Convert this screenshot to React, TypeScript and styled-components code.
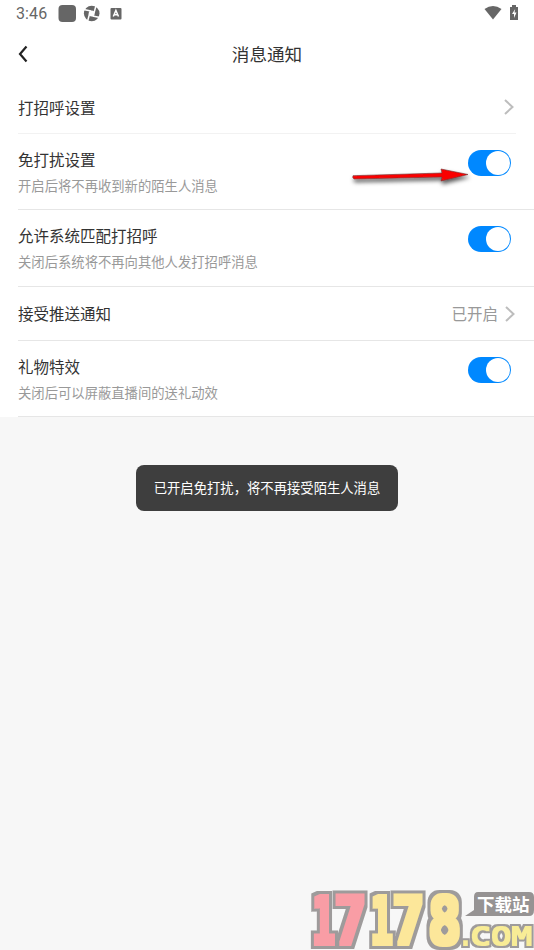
import React from "react";
import styled, { createGlobalStyle } from "styled-components";

const GlobalStyle = createGlobalStyle`
  * { box-sizing: border-box; }
  body {
    margin: 0;
    background: #f7f7f7;
    font-family: "Noto Sans CJK SC", "Noto Sans", sans-serif;
  }
`;

const Screen = styled.div`
  position: relative;
  width: 534px;
  height: 950px;
  overflow: hidden;
  background: #f7f7f7;
`;

const StatusBar = styled.div`
  display: flex;
  align-items: center;
  height: 28px;
  padding: 0 15px 0 16px;
  background: #fff;
  color: #666;
`;

const Clock = styled.span`
  width: 42px;
  font: 400 16px/28px Roboto, sans-serif;
  letter-spacing: 0.1px;
`;

const StatusIcons = styled.div`
  display: flex;
  align-items: center;
  height: 28px;
  flex: 1;
`;

const SystemIcons = styled.div`
  display: flex;
  gap: 7px;
  margin-top: -2px;
`;

const Header = styled.header`
  display: grid;
  grid-template-columns: 36px 1fr 36px;
  align-items: center;
  height: 53px;
  padding-bottom: 2px;
  background: #fff;
`;

const BackButton = styled.button`
  display: flex;
  padding: 0 0 0 16px;
  border: 0;
  background: none;
`;

const Title = styled.h1`
  margin: 0;
  text-align: center;
  font-size: 17.6px;
  line-height: 26px;
  font-weight: 400;
  color: #333;
`;

const List = styled.main`
  display: flex;
  flex-direction: column;
  background: #fff;
`;

const Row = styled.section<{ $height: number; $inset?: boolean }>`
  display: flex;
  justify-content: space-between;
  height: ${(p) => p.$height}px;
  margin-left: 18px;
  margin-right: ${(p) => (p.$inset ? 18 : 0)}px;
  padding-right: ${(p) => (p.$inset ? 1 : 18)}px;
  border-bottom: 1px solid ${(p) => (p.$inset ? "#f2f2f2" : "#e6e6e6")};
`;

const Labels = styled.div<{ $top: number }>`
  display: flex;
  flex-direction: column;
  padding-top: ${(p) => p.$top}px;
`;

const Label = styled.span`
  font-size: 15.5px;
  line-height: 24px;
  color: #333;
`;

const Hint = styled.span`
  margin-top: 5px;
  font-size: 13.33px;
  line-height: 20px;
  color: #999;
`;

const Value = styled.div`
  display: flex;
  align-items: center;
  gap: 6px;
  font-size: 15.5px;
  color: #999;
`;

const ValueText = styled.span`
  line-height: 24px;
  padding-bottom: 2px;
`;

const Toggle = styled.button`
  display: flex;
  justify-content: flex-end;
  width: 43px;
  height: 26px;
  margin: 16px 5px 0 0;
  padding: 1px;
  border: 0;
  border-radius: 13px;
  background: #0088ff;
`;

const Knob = styled.span`
  width: 24px;
  height: 24px;
  border-radius: 50%;
  background: #fff;
`;

const Toast = styled.div`
  position: absolute;
  left: 136px;
  top: 465px;
  width: 262px;
  height: 46px;
  border-radius: 8px;
  background: #3e3e3e;
  color: #fff;
  font-size: 13.33px;
  line-height: 46px;
  text-align: center;
  white-space: nowrap;
`;

const Pointer = styled.svg`
  position: absolute;
  left: 343px;
  top: 160px;
`;

const Watermark = styled.div`
  position: absolute;
  left: 304px;
  top: 884px;
  width: 230px;
  height: 66px;
`;

const WatermarkArt = styled.svg`
  display: block;
`;

const Chevron = () => (
  <svg width="12" height="18" viewBox="0 0 12 18" fill="none">
    <path d="M2 2L9.5 9L2 16" stroke="#bdbdbd" strokeWidth="2" />
  </svg>
);

const Switch = () => (
  <Toggle role="switch" aria-checked="true">
    <Knob />
  </Toggle>
);

const ToggleRow = ({ label, hint, height }: { label: string; hint: string; height: number }) => (
  <Row $height={height}>
    <Labels $top={13}>
      <Label>{label}</Label>
      <Hint>{hint}</Hint>
    </Labels>
    <Switch />
  </Row>
);

const digits = [
  { char: "1", x: 8.5, scale: 0.56, fill: "#f99da5" },
  { char: "7", x: 30, scale: 0.82, fill: "#f99da5" },
  { char: "1", x: 67, scale: 0.54, fill: "#fce79a" },
  { char: "7", x: 88, scale: 0.82, fill: "#fce79a" },
  { char: "8", x: 124, scale: 0.84, fill: "#fce79a" },
];

const BlockOutline = ({ id, grow, edge }: { id: string; grow: number; edge: number }) => (
  <filter id={id} filterUnits="userSpaceOnUse" x="0" y="0" width="230" height="66" colorInterpolationFilters="sRGB">
    <feMorphology in="SourceGraphic" operator="dilate" radius={grow} result="body" />
    <feMorphology in="SourceAlpha" operator="dilate" radius={edge} result="spread" />
    <feFlood floodColor="#9e9b9b" />
    <feComposite in2="spread" operator="in" result="outline" />
    <feMerge>
      <feMergeNode in="outline" />
      <feMergeNode in="body" />
    </feMerge>
  </filter>
);

const Brand = () => (
  <Watermark>
    <WatermarkArt width="230" height="66" viewBox="0 0 230 66">
      <defs>
        <BlockOutline id="digits" grow={2} edge={5} />
        <BlockOutline id="domain" grow={1} edge={3} />
      </defs>
      <g fontFamily="DejaVu Sans Mono, monospace">
        <g filter="url(#digits)" fontWeight="700">
          {digits.map((d, i) => (
            <text key={i} fontSize="66" fill={d.fill} transform={`translate(${d.x} 60) scale(${d.scale} 1)`}>
              {d.char}
            </text>
          ))}
        </g>
        <g filter="url(#domain)" fill="#f8ec96" fontSize="24">
          <text transform="translate(155 61) scale(0.9 1)">.</text>
          <text transform="translate(166.5 61) scale(1.42 1)">COM</text>
        </g>
      </g>
      <path d="M174 8H225Q230 8 230 13V26Q230 32 225 32H161L170 26V13Q170 8 174 8Z" fill="#969393" />
      <text x="173" y="26.5" fontFamily="Noto Sans CJK SC, sans-serif" fontWeight="700" fontSize="17.5" fill="#fff">下载站</text>
    </WatermarkArt>
  </Watermark>
);

export default function App() {
  return (
    <>
      <GlobalStyle />
      <Screen>
        <StatusBar>
          <Clock>3:46</Clock>
          <StatusIcons>
            <svg width="68" height="20" viewBox="0 0 68 20">
              <rect x="0.5" y="1" width="17.5" height="17" rx="4" fill="#666" />
              <circle cx="33.7" cy="9.5" r="7.8" fill="#666" />
              <circle cx="33.7" cy="9.5" r="3" fill="#fff" />
              <path d="M25.5 5.5L33 7M38 1.5L36 9M42 13.5L34.5 12M29.5 17.5L31.5 10" stroke="#fff" strokeWidth="1.5" />
              <rect x="52.5" y="4" width="11" height="11.5" rx="1" fill="#666" />
              <path d="M55.3 12.5L57.9 6.5L60.5 12.5M56.3 10.8H59.5" fill="none" stroke="#fff" strokeWidth="1.5" />
            </svg>
          </StatusIcons>
          <SystemIcons>
            <svg width="18" height="16" viewBox="0 0 18 16">
              <path d="M0.5 4Q9 -2 17.5 4L9 14.5Z" fill="#666" />
            </svg>
            <svg width="10" height="16" viewBox="0 0 10 16">
              <path d="M3 0H7V2H9V15H1V2H3Z" fill="#666" />
              <path d="M6.2 4L3 9H5V13L7.5 7.5H5.5Z" fill="#fff" />
            </svg>
          </SystemIcons>
        </StatusBar>
        <Header>
          <BackButton aria-label="返回">
            <svg width="12" height="18" viewBox="0 0 12 18" fill="none">
              <path d="M10.5 1.5L4 9L10.5 16.5" stroke="#222" strokeWidth="2.2" />
            </svg>
          </BackButton>
          <Title>消息通知</Title>
        </Header>
        <List>
          <Row $height={53} $inset>
            <Labels $top={14}><Label>打招呼设置</Label></Labels>
            <Value><Chevron /></Value>
          </Row>
          <ToggleRow height={76} label="免打扰设置" hint="开启后将不再收到新的陌生人消息" />
          <ToggleRow height={77} label="允许系统匹配打招呼" hint="关闭后系统将不再向其他人发打招呼消息" />
          <Row $height={54}>
            <Labels $top={14}><Label>接受推送通知</Label></Labels>
            <Value><ValueText>已开启</ValueText><Chevron /></Value>
          </Row>
          <ToggleRow height={76} label="礼物特效" hint="关闭后可以屏蔽直播间的送礼动效" />
        </List>
        <Toast>已开启免打扰，将不再接受陌生人消息</Toast>
        <Pointer width="134" height="36" viewBox="0 0 134 36">
          <defs>
            <filter id="shadow" x="-10%" y="-50%" width="120%" height="220%">
              <feDropShadow dx="1" dy="3" stdDeviation="2" floodColor="#000" floodOpacity="0.65" />
            </filter>
          </defs>
          <path
            d="M10 15.7L99 13L98 9L125 14.5L98 21L99 17L11 19Q9 17.5 10 15.7Z"
            fill="#fa0505"
            stroke="#703030"
            strokeWidth="0.6"
            filter="url(#shadow)"
          />
        </Pointer>
        <Brand />
      </Screen>
    </>
  );
}
